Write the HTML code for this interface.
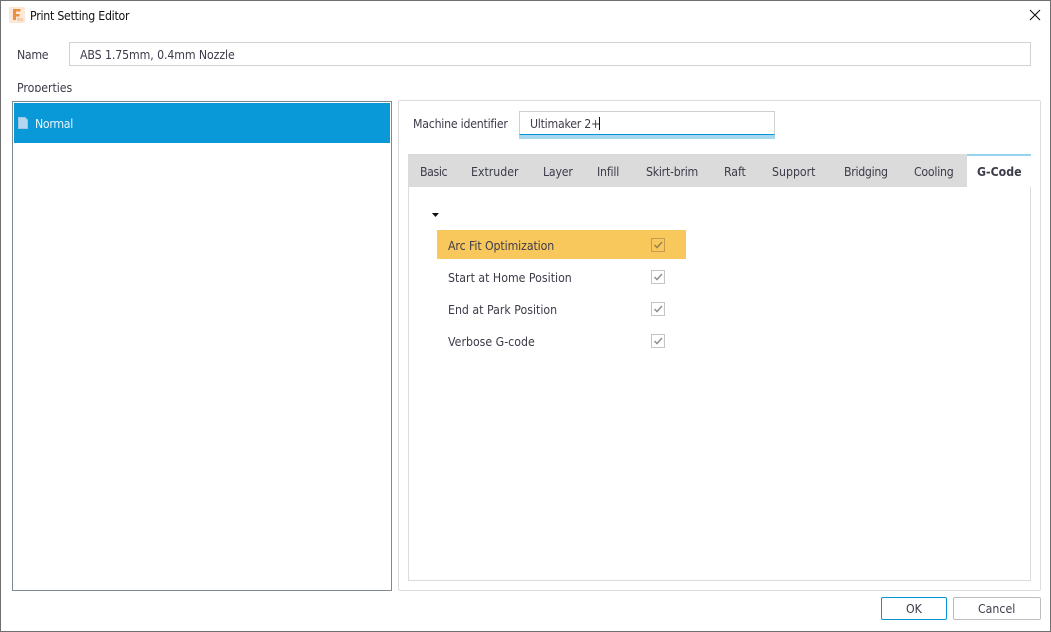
<!DOCTYPE html>
<html><head><meta charset="utf-8">
<style>
html,body{margin:0;padding:0;background:#fff}
body{width:1051px;height:632px;position:relative;overflow:hidden;font-family:"DejaVu Sans","Liberation Sans",sans-serif;font-size:12px;color:#3c3c4a}
div,span.t{position:absolute;box-sizing:border-box}
.t{white-space:nowrap;line-height:16px;font-size:12px;letter-spacing:0;transform:scaleX(.917);transform-origin:0 50%}
.cb{width:14px;height:14px;left:651px;border:1px solid #c4c4c4;background:#fff}
.cb svg{position:absolute;left:0;top:0}
</style></head><body>
<div style="left:0;top:0;width:1051px;height:632px;border:1px solid #6f6f6f"></div>
<svg style="position:absolute;left:9px;top:7px" width="16" height="16" viewBox="0 0 16 16"><rect width="16" height="16" rx="1" fill="#fbe8d8"/><path d="M4 2h7.500v2.500H7v2.500h3.500v2.500H7V13H4z" fill="#e9913f"/><rect x="8" y="11" width="6" height="3" fill="#f7cfac"/></svg>
<span class="t" style="left:30px;top:8px;color:#111;letter-spacing:-.27px">Print Setting Editor</span>
<svg style="position:absolute;left:1029px;top:9px" width="12" height="12" viewBox="0 0 12 12"><path d="M1 1l10 10M11 1L1 11" stroke="#111" stroke-width="1.100" fill="none"/></svg>

<span class="t" style="left:17px;top:47px;letter-spacing:-.33px">Name</span>
<div style="left:69px;top:42px;width:962px;height:24px;border:1px solid #d2d2d2"></div>
<span class="t" style="left:80px;top:47px;letter-spacing:-.11px">ABS 1.75mm, 0.4mm Nozzle</span>
<div style="left:17px;top:78px;width:80px;height:14px;overflow:hidden"><span class="t" style="left:0;top:2px;letter-spacing:-.05px">Properties</span></div>

<div style="left:12px;top:101px;width:380px;height:490px;border:1px solid #808890"></div>
<div style="left:14px;top:103px;width:376px;height:40px;background:#0998d8"></div>
<svg style="position:absolute;left:18px;top:117px" width="10" height="12" viewBox="0 0 10 12"><path d="M.5.500h6.500l2.500 2.500v8.500h-9z" fill="#b5d6ef" stroke="#9fc5e3"/></svg>
<span class="t" style="left:35px;top:116px;color:#e6f4fb;letter-spacing:-.33px">Normal</span>

<div style="left:398px;top:100px;width:643px;height:491px;border:1px solid #dcdcdc;border-radius:2px"></div>
<span class="t" style="left:413px;top:116px;letter-spacing:-.26px">Machine identifier</span>
<div style="left:519px;top:111px;width:256px;height:24px;border:1px solid #d0d0d0;border-bottom:1px solid #0696d7"></div>
<div style="left:519px;top:135px;width:256px;height:4px;background:#a5d8ef"></div>
<span class="t" style="left:530px;top:116px;letter-spacing:-.27px">Ultimaker 2+</span>
<div style="left:599px;top:117px;width:1px;height:13px;background:#111"></div>

<div style="left:408px;top:154px;width:559px;height:33px;background:#dbdbdb"></div>
<div style="left:967px;top:154px;width:64px;height:2px;background:#96d3ee"></div>
<div style="left:408px;top:186px;width:623px;height:395px;border:1px solid #dcdcdc;border-top:0"></div>
<div style="left:408px;top:186px;width:559px;height:1px;background:#dbdbdb"></div>
<div style="left:1030px;top:156px;width:1px;height:31px;background:#fff"></div>
<span class="t" style="left:420px;top:164px;letter-spacing:-.44px">Basic</span>
<span class="t" style="left:471px;top:164px">Extruder</span>
<span class="t" style="left:543px;top:164px;letter-spacing:-.22px">Layer</span>
<span class="t" style="left:597px;top:164px;letter-spacing:-.22px">Infill</span>
<span class="t" style="left:646px;top:164px;letter-spacing:-.27px">Skirt-brim</span>
<span class="t" style="left:724px;top:164px;letter-spacing:-.11px">Raft</span>
<span class="t" style="left:772px;top:164px">Support</span>
<span class="t" style="left:844px;top:164px;letter-spacing:-.33px">Bridging</span>
<span class="t" style="left:914px;top:164px;letter-spacing:-.27px">Cooling</span>
<span class="t" style="left:977px;top:164px;font-weight:bold">G-Code</span>

<svg style="position:absolute;left:432px;top:213px" width="7" height="4" viewBox="0 0 7 4"><path d="M0 0h7L3.500 4z" fill="#111"/></svg>

<div style="left:437px;top:230px;width:249px;height:29px;background:#f9c85c"></div>
<span class="t" style="left:448px;top:238px;letter-spacing:-.11px">Arc Fit Optimization</span>
<span class="t" style="left:448px;top:270px">Start at Home Position</span>
<span class="t" style="left:448px;top:302px">End at Park Position</span>
<span class="t" style="left:448px;top:334px">Verbose G-code</span>

<div class="cb" style="top:238px;background:#f9c85c;border-color:#c49c4c"><svg width="12" height="12" viewBox="0 0 12 12"><path d="M2.500 6l2.500 2.500L10 3" stroke="#94804c" stroke-width="1.500" fill="none"/></svg></div>
<div class="cb" style="top:270px"><svg width="12" height="12" viewBox="0 0 12 12"><path d="M2.500 6l2.500 2.500L10 3" stroke="#909090" stroke-width="1.500" fill="none"/></svg></div>
<div class="cb" style="top:302px"><svg width="12" height="12" viewBox="0 0 12 12"><path d="M2.500 6l2.500 2.500L10 3" stroke="#909090" stroke-width="1.500" fill="none"/></svg></div>
<div class="cb" style="top:334px"><svg width="12" height="12" viewBox="0 0 12 12"><path d="M2.500 6l2.500 2.500L10 3" stroke="#909090" stroke-width="1.500" fill="none"/></svg></div>

<div style="left:881px;top:597px;width:66px;height:23px;border:1px solid #0696d7;border-radius:2px"></div>
<span class="t" style="left:906px;top:601px">OK</span>
<div style="left:953px;top:597px;width:88px;height:23px;border:1px solid #bdbdbd;border-radius:2px"></div>
<span class="t" style="left:978px;top:601px">Cancel</span>
</body></html>
